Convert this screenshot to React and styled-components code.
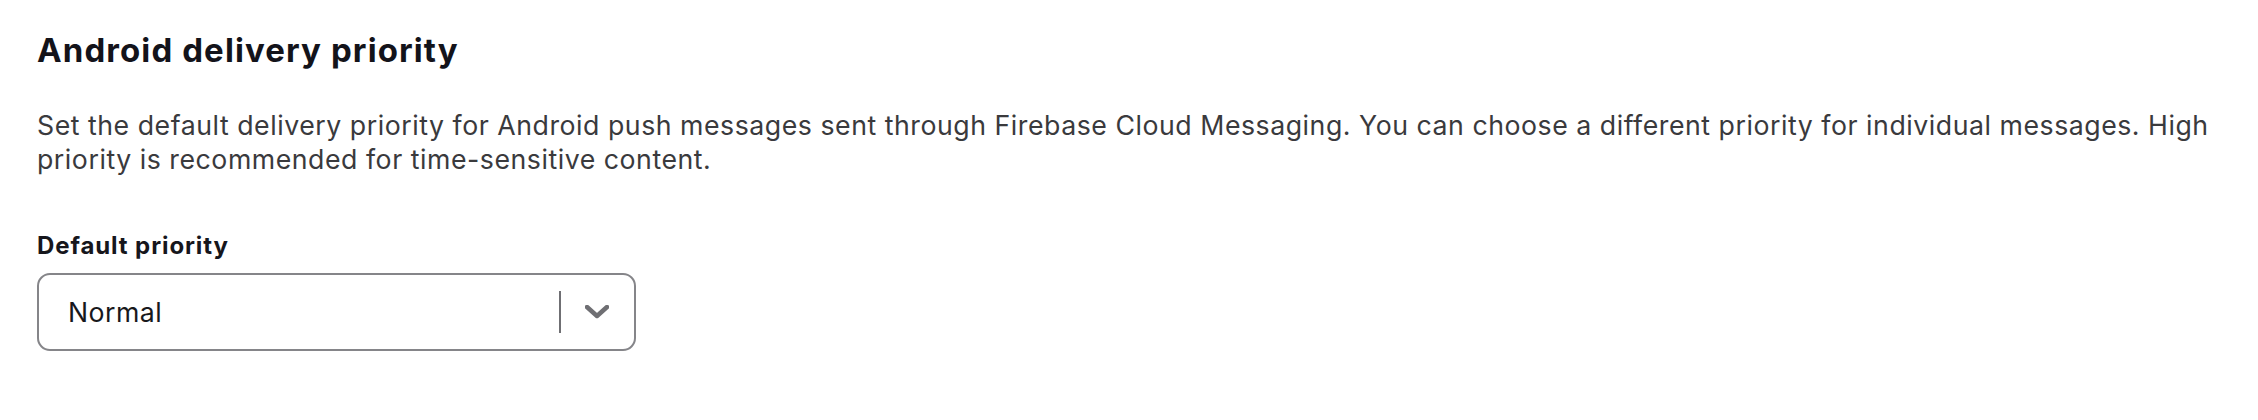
import React from "react";
import styled, { createGlobalStyle } from "styled-components";

const GlobalStyle = createGlobalStyle`
  html, body {
    margin: 0;
    padding: 0;
    background: #ffffff;
  }
  body {
    font-family: Inter, "Noto Sans", sans-serif;
  }
`;

const App = () => {
  return (
    <>
      <GlobalStyle />
      <Section>
        <Title>Android delivery priority</Title>
        <Description>
          Set the default delivery priority for Android push messages sent
          through Firebase Cloud Messaging. You can choose a different priority
          for individual messages. High priority is recommended for
          time-sensitive content.
        </Description>
        <Field>
          <Label>Default priority</Label>
          <Select>
            <SelectValue>Normal</SelectValue>
            <Indicators>
              <Divider />
              <Chevron viewBox="0 0 24 14">
                <polyline points="2,2 12,11 22,2" />
              </Chevron>
            </Indicators>
          </Select>
        </Field>
      </Section>
    </>
  );
};

export default App;

const Section = styled.section`
  padding: 30px 36px 40px 37px;
  display: flex;
  flex-direction: column;
`;

const Title = styled.h2`
  margin: 0;
  font-size: 33px;
  line-height: 40px;
  font-weight: 700;
  color: #13131a;
  letter-spacing: 1.1px;
`;

const Description = styled.p`
  margin: 37.5px 0 0;
  font-size: 26.7px;
  line-height: 34.5px;
  font-weight: 400;
  color: #3a3a3d;
  letter-spacing: 0.53px;
`;

const Field = styled.div`
  margin-top: 55px;
  display: flex;
  flex-direction: column;
  gap: 13px;
`;

const Label = styled.label`
  font-size: 24px;
  line-height: 28px;
  font-weight: 700;
  color: #16161c;
  letter-spacing: 0.9px;
`;

const Select = styled.div`
  box-sizing: border-box;
  width: 599px;
  height: 78px;
  border: 2px solid #858589;
  border-radius: 13px;
  display: flex;
  align-items: center;
  padding-left: 29px;
  background: #ffffff;
`;

const SelectValue = styled.span`
  flex: 1;
  font-size: 26.7px;
  color: #18181c;
  letter-spacing: 0.45px;
`;

const Indicators = styled.div`
  display: flex;
  align-items: center;
  height: 100%;
`;

const Divider = styled.span`
  width: 2px;
  height: 42px;
  background: #6f6f73;
`;

const Chevron = styled.svg`
  width: 24px;
  height: 14px;
  margin: 0 25px 0 24px;
  fill: none;
  stroke: #6f6f73;
  stroke-width: 4.5;
  stroke-linecap: round;
  stroke-linejoin: round;
`;
